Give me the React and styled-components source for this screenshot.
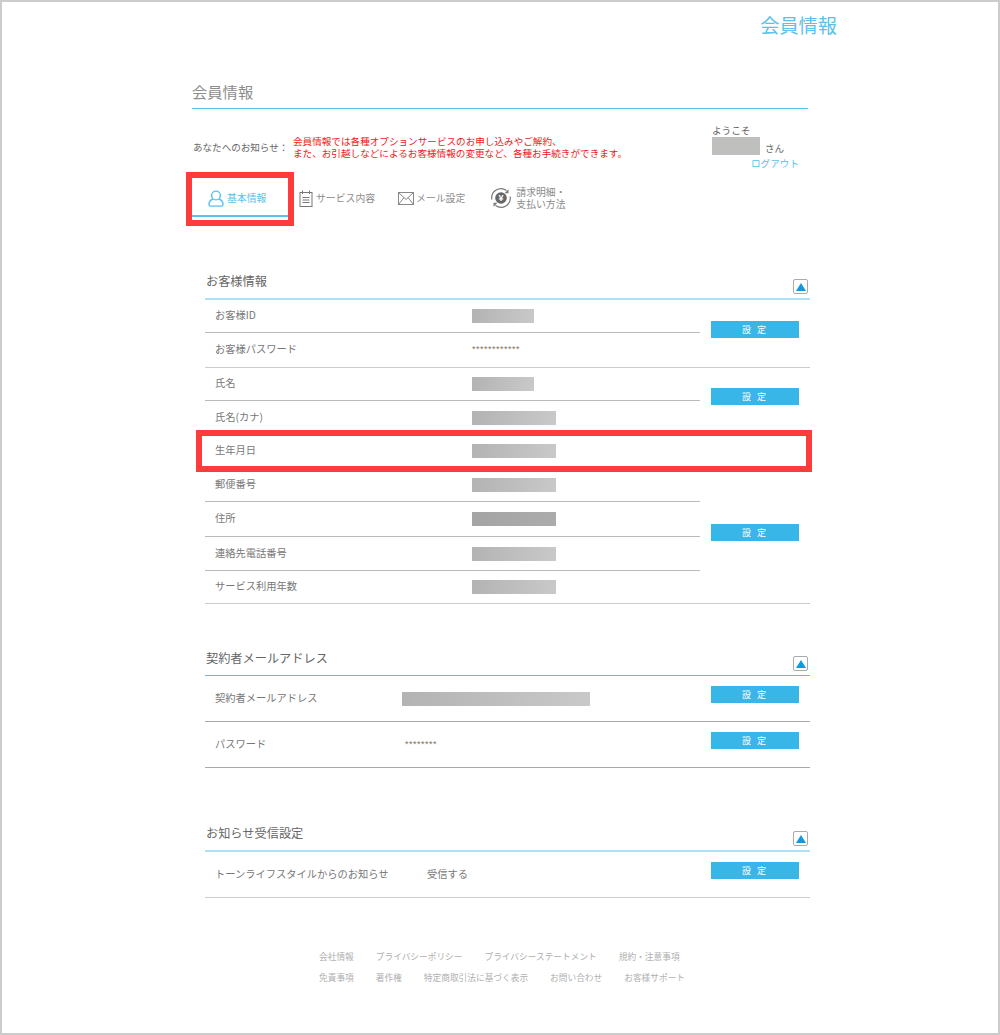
import React from 'react'
import styled, { createGlobalStyle } from 'styled-components'

const colors = {
  sky: '#5bc0ea',
  button: '#38b6e8',
  text: '#777',
  mute: '#8c8c8c',
  red: '#ff3b3b',
}

const GlobalStyle = createGlobalStyle`
  html, body { margin: 0; padding: 0; background: #fff; }
  body {
    font-family: "Noto Sans CJK JP", "Noto Sans", "Liberation Sans", sans-serif;
    color: ${colors.text};
  }
`

const Page = styled.div`
  width: 1000px;
  height: 1035px;
  box-sizing: border-box;
  border: 2px solid #ccc;
  overflow: hidden;
`

const TopBar = styled.header`
  height: 46px;
  padding-right: 161px;
  display: flex;
  justify-content: flex-end;
  align-items: center;
  font-size: 19.2px;
  color: ${colors.sky};
`

const Main = styled.main`
  width: 616px;
  margin-left: 190px;
`

const PageTitle = styled.h1`
  margin: 0;
  height: 61px;
  box-sizing: border-box;
  padding-top: 31px;
  border-bottom: 1px solid ${colors.sky};
  font-size: 15.3px;
  line-height: 24px;
  font-weight: 400;
  color: ${colors.mute};
`

const NoticeRow = styled.div`
  display: flex;
  height: 64px;
  padding-top: 15px;
  box-sizing: border-box;
`

const NoticeLabel = styled.div`
  width: 101px;
  padding: 14px 0 0 1px;
  box-sizing: border-box;
  font-size: 9.55px;
  line-height: 18px;
  color: #666;
`

const NoticeText = styled.div`
  width: 419px;
  padding-top: 11px;
  font-size: 9.6px;
  line-height: 12px;
  color: #f01818;
`

const UserBox = styled.div`
  width: 88px;
  font-size: 9.6px;
  color: #666;
`

const Welcome = styled.div`
  line-height: 13px;
`

const UserName = styled.div`
  display: flex;
  align-items: flex-end;
  gap: 5px;
  height: 18px;
  line-height: 13px;
`

const NameMask = styled.span`
  width: 48px;
  height: 18px;
  background: #bfbfbe;
`

const Logout = styled.a`
  display: block;
  margin: 1px 1px 0 0;
  text-align: right;
  color: ${colors.sky};
  line-height: 14px;
`

const Tabs = styled.nav`
  display: flex;
  align-items: flex-start;
  height: 44px;
  margin-top: 10px;
`

const Tab = styled.a`
  position: relative;
  display: flex;
  align-items: center;
  gap: ${(p) => p.$gap || 3}px;
  box-sizing: border-box;
  height: 34px;
  margin-right: ${(p) => p.$after || 0}px;
  padding: 0 0 2px ${(p) => p.$pad || 0}px;
  width: ${(p) => (p.$active ? '96px' : 'auto')};
  font-size: 9.85px;
  line-height: 12px;
  color: ${(p) => (p.$active ? colors.sky : colors.mute)};
  border-bottom: 2px solid ${(p) => (p.$active ? colors.sky : 'transparent')};
`

const RedFrame = styled.div`
  position: absolute;
  top: ${(p) => p.$top}px;
  right: ${(p) => p.$right}px;
  bottom: ${(p) => p.$bottom}px;
  left: ${(p) => p.$left}px;
  border: 6px solid ${colors.red};
  pointer-events: none;
`

const Section = styled.section`
  width: 605px;
  margin: ${(p) => p.$top}px 0 0 13px;
`

const SectionHead = styled.div`
  display: flex;
  justify-content: space-between;
  height: ${(p) => p.$h}px;
  box-sizing: border-box;
  border-bottom: ${(p) => p.$line};
`

const SectionTitle = styled.h2`
  margin: 0 0 0 1px;
  font-size: 12.2px;
  line-height: 34px;
  font-weight: 400;
  color: #666;
`

const Collapse = styled.button`
  align-self: flex-end;
  display: flex;
  align-items: center;
  justify-content: center;
  width: 15px;
  height: 15px;
  margin: 0 2px 4px 0;
  padding: 0;
  box-sizing: border-box;
  border: 1px solid #aaa;
  border-radius: 2px;
  background: #fff;
  &::after {
    content: '';
    border-left: 5px solid transparent;
    border-right: 5px solid transparent;
    border-bottom: 8px solid #0d9ae2;
  }
`

const Group = styled.div`
  position: relative;
  display: flex;
  border-bottom: 1px solid ${(p) => p.$line || '#ccc'};
`

const RowList = styled.div`
  width: 495px;
  flex: none;
`

const Row = styled.div`
  display: flex;
  align-items: center;
  box-sizing: border-box;
  height: ${(p) => p.$h}px;
  border-bottom: ${(p) => (p.$last ? 'none' : '1px solid #bbb')};
  font-size: 10.25px;
`

const Label = styled.div`
  width: ${(p) => p.$w}px;
  flex: none;
  box-sizing: border-box;
  padding: 0 0 3px 10px;
`

const Value = styled.div`
  padding-bottom: 3px;
`

const Mask = styled.span`
  display: block;
  width: ${(p) => p.$w}px;
  height: 14px;
  background: ${(p) =>
    p.$dark ? 'linear-gradient(100deg, #a4a4a4, #acacac)' : 'linear-gradient(100deg, #b4b3b3, #c9c9c9)'};
`

const Stars = styled.span`
  font-family: "Liberation Sans", sans-serif;
  font-size: 9px;
  letter-spacing: 0.5px;
  color: #84745c;
  margin: -2px 0 0 ${(p) => p.$left || 0}px;
`

const ButtonCell = styled.div`
  display: flex;
  align-items: center;
  padding: 0 0 ${(p) => p.$lift || 8}px 11px;
`

const SetButton = styled.button`
  width: 88px;
  height: 17px;
  padding: 0;
  border: 0;
  background: ${colors.button};
  color: #fff;
  font: inherit;
  font-size: 9px;
  line-height: 17px;
  letter-spacing: 2px;
`

const Footer = styled.footer`
  margin: 52px 0 0 317px;
  font-size: 8.7px;
  color: #b0b0b0;
`

const FooterRow = styled.div`
  display: flex;
  gap: 22px;
  height: 21px;
  line-height: 14px;
`

const UserIcon = () => (
  <svg width="16" height="17" viewBox="0 0 16 17" fill="none" stroke={colors.sky} strokeWidth="1.4">
    <circle cx="8" cy="5.5" r="4.4" />
    <path d="M5 9C2.5 10 1 12.5 1 14.6c0 1 .6 1.5 1.5 1.5h11c.9 0 1.5-.5 1.5-1.5C15 12.5 13.500 10 11 9" />
  </svg>
)

const SheetIcon = () => (
  <svg width="14" height="17" viewBox="0 0 14 17" fill="none" stroke="#777" strokeWidth="1">
    <rect x="1" y="2.500" width="12" height="14" />
    <path d="M3.500 0.500v3.500M10.500 0.500v3.500M3.500 7.500h7M3.500 10h7M3.500 12.500h7" />
  </svg>
)

const MailIcon = () => (
  <svg width="16" height="13" viewBox="0 0 16 13" fill="none" stroke="#888" strokeWidth="1">
    <rect x="0.500" y="0.500" width="15" height="12" />
    <path d="M0.500 0.500L8 7.500L15.500 0.500M0.500 12.500L6 5.500M15.500 12.500L10 5.500" />
  </svg>
)

const YenIcon = () => (
  <svg width="22" height="22" viewBox="0 0 22 22" fill="none">
    <circle cx="11" cy="11" r="5.800" fill="#666" />
    <path d="M1.800 12.500A9.400 9.400 0 0 1 16.500 3.400M20.200 9.500A9.400 9.400 0 0 1 5.500 18.600" stroke="#777" strokeWidth="1.200" />
    <path d="M18.500 2.200v4h-4zM3.500 19.800v-4h4z" fill="#777" />
    <text x="11" y="14.200" textAnchor="middle" fontSize="9" fontWeight="700" fill="#fff" fontFamily="Liberation Sans, sans-serif">¥</text>
  </svg>
)

const customerGroups = [
  {
    button: true,
    rows: [
      { h: 33, label: 'お客様ID', mask: 62 },
      { h: 34, label: 'お客様パスワード', stars: '************' },
    ],
  },
  {
    button: true,
    lift: 10,
    rows: [
      { h: 33, label: '氏名', mask: 62 },
      { h: 33, label: '氏名(カナ)', mask: 84 },
    ],
  },
  { framed: true, rows: [{ h: 32, label: '生年月日', mask: 84 }] },
  {
    button: true,
    lift: 6,
    rows: [
      { h: 34, label: '郵便番号', mask: 84 },
      { h: 35, label: '住所', mask: 84, dark: true },
      { h: 34, label: '連絡先電話番号', mask: 84 },
      { h: 32, label: 'サービス利用年数', mask: 84 },
    ],
  },
]

const footerLinks = [
  ['会社情報', 'プライバシーポリシー', 'プライバシーステートメント', '規約・注意事項'],
  ['免責事項', '著作権', '特定商取引法に基づく表示', 'お問い合わせ', 'お客様サポート'],
]

export default function App() {
  return (
    <Page>
      <GlobalStyle />
      <TopBar>会員情報</TopBar>
      <Main>
        <PageTitle>会員情報</PageTitle>
        <NoticeRow>
          <NoticeLabel>あなたへのお知らせ：</NoticeLabel>
          <NoticeText>
            会員情報では各種オプションサービスのお申し込みやご解約、
            <br />
            また、お引越しなどによるお客様情報の変更など、各種お手続きができます。
          </NoticeText>
          <UserBox>
            <Welcome>ようこそ</Welcome>
            <UserName>
              <NameMask />
              さん
            </UserName>
            <Logout>ログアウト</Logout>
          </UserBox>
        </NoticeRow>
        <Tabs>
          <Tab $active $pad={16} $after={11}>
            <UserIcon />
            基本情報
            <RedFrame $top={-11} $right={-6} $bottom={-11} $left={-6} />
          </Tab>
          <Tab $after={23}>
            <SheetIcon />
            サービス内容
          </Tab>
          <Tab $gap={2} $after={25}>
            <MailIcon />
            メール設定
          </Tab>
          <Tab $gap={4}>
            <YenIcon />
            <span>
              請求明細・
              <br />
              支払い方法
            </span>
          </Tab>
        </Tabs>

        <Section $top={37}>
          <SectionHead $h={36} $line="2px solid #aee0f6">
            <SectionTitle>お客様情報</SectionTitle>
            <Collapse />
          </SectionHead>
          {customerGroups.map((group) => (
            <Group key={group.rows[0].label}>
              <RowList>
                {group.rows.map((row, i) => (
                  <Row key={row.label} $h={row.h} $last={i === group.rows.length - 1}>
                    <Label $w={267}>{row.label}</Label>
                    {row.mask ? <Mask $w={row.mask} $dark={row.dark} /> : <Stars>{row.stars}</Stars>}
                  </Row>
                ))}
              </RowList>
              {group.button && (
                <ButtonCell $lift={group.lift}>
                  <SetButton>設 定</SetButton>
                </ButtonCell>
              )}
              {group.framed && <RedFrame $top={-5} $right={-2} $bottom={-5} $left={-9} />}
            </Group>
          ))}
        </Section>

        <Section $top={37}>
          <SectionHead $h={35} $line="1px solid #6ab7dc">
            <SectionTitle>契約者メールアドレス</SectionTitle>
            <Collapse />
          </SectionHead>
          <Group $line="#aaa">
            <RowList>
              <Row $h={45} $last>
                <Label $w={197}>契約者メールアドレス</Label>
                <Mask $w={188} />
              </Row>
            </RowList>
            <ButtonCell>
              <SetButton>設 定</SetButton>
            </ButtonCell>
          </Group>
          <Group $line="#aaa">
            <RowList>
              <Row $h={45} $last>
                <Label $w={197}>パスワード</Label>
                <Stars $left={3}>********</Stars>
              </Row>
            </RowList>
            <ButtonCell>
              <SetButton>設 定</SetButton>
            </ButtonCell>
          </Group>
        </Section>

        <Section $top={48}>
          <SectionHead $h={36} $line="2px solid #aee0f6">
            <SectionTitle>お知らせ受信設定</SectionTitle>
            <Collapse />
          </SectionHead>
          <Group>
            <RowList>
              <Row $h={45} $last>
                <Label $w={222}>トーンライフスタイルからのお知らせ</Label>
                <Value>受信する</Value>
              </Row>
            </RowList>
            <ButtonCell>
              <SetButton>設 定</SetButton>
            </ButtonCell>
          </Group>
        </Section>
      </Main>
      <Footer>
        {footerLinks.map((links) => (
          <FooterRow key={links[0]}>
            {links.map((link) => (
              <a key={link}>{link}</a>
            ))}
          </FooterRow>
        ))}
      </Footer>
    </Page>
  )
}
